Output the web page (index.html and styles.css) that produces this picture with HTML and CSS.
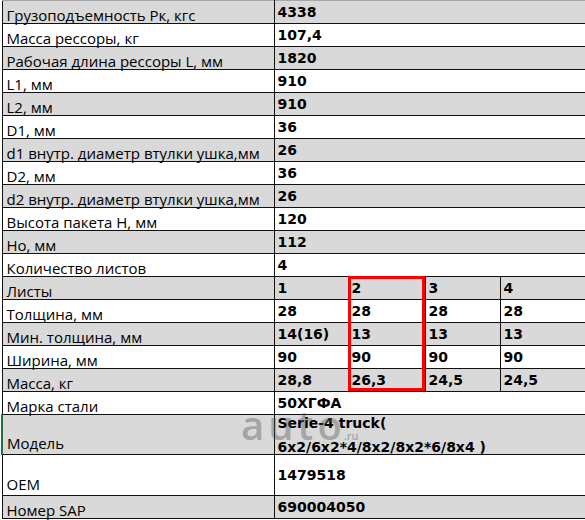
FILE: index.html
```html
<!DOCTYPE html>
<html lang="ru">
<head>
<meta charset="utf-8">
<title>Рессора</title>
<link rel="stylesheet" href="styles.css">
</head>
<body>
<div class="sheet">
<table class="spec">
<colgroup>
<col class="c-label"><col class="c-1"><col class="c-2"><col class="c-3"><col class="c-4">
</colgroup>
<tbody>
<tr class="shade first"><td class="lbl">Грузоподъемность Рк, кгс</td><td class="val" colspan="4">4338</td></tr>
<tr><td class="lbl">Масса рессоры, кг</td><td class="val" colspan="4">107,4</td></tr>
<tr class="shade"><td class="lbl">Рабочая длина рессоры L, мм</td><td class="val" colspan="4">1820</td></tr>
<tr><td class="lbl">L1, мм</td><td class="val" colspan="4">910</td></tr>
<tr class="shade"><td class="lbl">L2, мм</td><td class="val" colspan="4">910</td></tr>
<tr><td class="lbl">D1, мм</td><td class="val" colspan="4">36</td></tr>
<tr class="shade"><td class="lbl">d1 внутр. диаметр втулки ушка,мм</td><td class="val" colspan="4">26</td></tr>
<tr><td class="lbl">D2, мм</td><td class="val" colspan="4">36</td></tr>
<tr class="shade"><td class="lbl">d2 внутр. диаметр втулки ушка,мм</td><td class="val" colspan="4">26</td></tr>
<tr><td class="lbl">Высота пакета H, мм</td><td class="val" colspan="4">120</td></tr>
<tr class="shade"><td class="lbl">Но, мм</td><td class="val" colspan="4">112</td></tr>
<tr><td class="lbl">Количество листов</td><td class="val" colspan="4">4</td></tr>
<tr class="shade"><td class="lbl">Листы</td><td class="val">1</td><td class="val hl-cell">2<span class="hl-box"></span></td><td class="val">3</td><td class="val">4</td></tr>
<tr><td class="lbl">Толщина, мм</td><td class="val">28</td><td class="val">28</td><td class="val">28</td><td class="val">28</td></tr>
<tr class="shade"><td class="lbl">Мин. толщина, мм</td><td class="val">14(16)</td><td class="val">13</td><td class="val">13</td><td class="val">13</td></tr>
<tr><td class="lbl">Ширина, мм</td><td class="val">90</td><td class="val">90</td><td class="val">90</td><td class="val">90</td></tr>
<tr class="shade"><td class="lbl">Масса, кг</td><td class="val">28,8</td><td class="val">26,3</td><td class="val">24,5</td><td class="val">24,5</td></tr>
<tr><td class="lbl">Марка стали</td><td class="val" colspan="4">50ХГФА</td></tr>
<tr class="shade tall-a"><td class="lbl lbl-tall sel">Модель</td><td class="val val-wrap" colspan="4"><div class="wrap">Serie-4 truck(<br>6x2/6x2*4/8x2/8x2*6/8x4 )</div></td></tr>
<tr class="tall-b"><td class="lbl lbl-tall">OEM</td><td class="val" colspan="4">1479518</td></tr>
<tr class="shade"><td class="lbl">Номер SAP</td><td class="val" colspan="4">690004050</td></tr>
</tbody>
</table>
<div class="watermark">auto<span class="wm-ru">.ru</span></div>
</div>
</body>
</html>
```
FILE: styles.css
```css
html, body {
  margin: 0;
  padding: 0;
  background: #ffffff;
  overflow: hidden;
}
.sheet {
  position: relative;
  width: 600px;
  height: 520px;
  overflow: hidden;
  padding-left: 1px;
}
.spec {
  border-collapse: collapse;
  table-layout: fixed;
  width: 600px;
}
.c-label { width: 272px; }
.c-1 { width: 74px; }
.c-2 { width: 77px; }
.c-3 { width: 75px; }
.c-4 { width: 102px; }
.spec td {
  border: 1px solid #111111;
  height: 22px;
  padding: 0;
  box-sizing: border-box;
  color: #000000;
  white-space: nowrap;
  overflow: visible;
}
.spec tr.first td { border-top-color: #a6a6a6; }
.spec tr.shade td { background: #d9d9d9; }
.lbl {
  font-family: "Open Sans", "Noto Sans", sans-serif;
  font-size: 15px;
  line-height: 16px;
  vertical-align: bottom;
  padding-left: 4px !important;
}
.val {
  font-family: "DejaVu Sans", sans-serif;
  font-weight: bold;
  font-size: 14px;
  line-height: 22px;
  vertical-align: middle;
  padding-left: 3px !important;
}
.tall-a td { height: 40px; }
.tall-b td { height: 41px; }
.lbl-tall { padding-bottom: 3px !important; }
.sel { border-left: 2px solid #217346 !important; }
.val-wrap { vertical-align: top; }
.wrap {
  line-height: 24px;
  height: 40px;
  margin-top: -4px;
  margin-bottom: -4px;
}
.hl-cell { position: relative; }
.hl-box {
  position: absolute;
  left: -1px;
  top: -1px;
  width: 77px;
  height: 115px;
  border: 3px solid #ff0000;
  box-sizing: border-box;
  pointer-events: none;
}
.watermark {
  position: absolute;
  z-index: 5;
  left: 241px;
  top: 400px;
  font-family: "Open Sans", sans-serif;
  font-weight: 600;
  font-size: 40px;
  line-height: 50px;
  letter-spacing: 4px;
  color: rgba(80, 80, 80, 0.4);
  pointer-events: none;
  white-space: nowrap;
}
.wm-ru {
  font-size: 11px;
  letter-spacing: 0;
  margin-left: -2px;
}
```
